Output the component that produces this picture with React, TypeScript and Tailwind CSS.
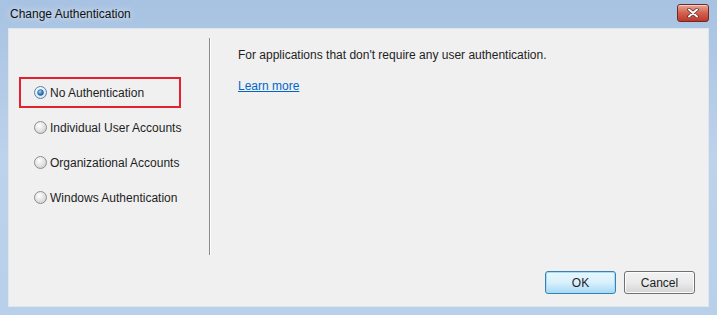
import React from "react";

const options = [
  "No Authentication",
  "Individual User Accounts",
  "Organizational Accounts",
  "Windows Authentication",
];

function Radio({ checked }: { checked: boolean }) {
  return (
    <svg width="13" height="13" viewBox="0 0 13 13" className="shrink-0">
      <defs>
        <radialGradient id={checked ? "rg-on" : "rg-off"} cx="40%" cy="35%" r="70%">
          <stop offset="0%" stopColor="#ffffff" />
          <stop offset="100%" stopColor={checked ? "#d6e4f2" : "#cfcfcf"} />
        </radialGradient>
        <radialGradient id="dot" cx="40%" cy="35%" r="70%">
          <stop offset="0%" stopColor="#a9d4f5" />
          <stop offset="60%" stopColor="#2f7fc4" />
          <stop offset="100%" stopColor="#1d4f8a" />
        </radialGradient>
      </defs>
      <circle cx="6.5" cy="6.5" r="6" fill={`url(#${checked ? "rg-on" : "rg-off"})`} stroke={checked ? "#5b7fa6" : "#8e8f8f"} strokeWidth="1" />
      {checked && <circle cx="6.5" cy="6.5" r="3" fill="url(#dot)" stroke="#2a5a8e" strokeWidth="0.5" />}
    </svg>
  );
}

export default function App() {
  return (
    <div
      className="w-[717px] h-[315px] flex flex-col bg-gradient-to-b from-[#a7c2e2] via-[#bdd2eb] to-[#b8d0ea] text-[12px] text-[#1e1e1e]"
      style={{ fontFamily: '"Liberation Sans", Arial, sans-serif' }}
    >
      {/* Title bar */}
      <div className="h-[28px] flex items-center justify-between pl-[10px] pr-[8px] shrink-0">
        <span className="text-[12px] text-[#111] [text-shadow:0_0_6px_rgba(255,255,255,0.9)]">
          Change Authentication
        </span>
        <div className="w-[32px] h-[18px] -mt-[3px] rounded-[3px] border border-[#6b2a24] bg-gradient-to-b from-[#e8a595] via-[#d3604e] to-[#c0352a] flex items-center justify-center shadow-[inset_0_1px_0_rgba(255,255,255,0.5)]">
          <svg width="12" height="10" viewBox="0 0 12 10">
            <path d="M2 1.5 L10 8.5 M10 1.5 L2 8.5" stroke="#5a2a25" strokeWidth="3.4" strokeLinecap="round" />
            <path d="M2 1.5 L10 8.5 M10 1.5 L2 8.5" stroke="#ffffff" strokeWidth="2" strokeLinecap="round" />
          </svg>
        </div>
      </div>

      {/* Client area */}
      <div className="mx-[8px] mb-[8px] flex-1 flex flex-col bg-[#f0f0f0] border border-[#dfe6ee]">
        <div className="flex mt-[9px] h-[217px]">
          {/* Left options */}
          <div className="w-[200px] pt-[37px] pl-[10px]">
            {options.map((o, i) =>
              i === 0 ? (
                <div key={o} className="h-[35px] flex items-center">
                  <div className="w-[162px] h-[31px] border-2 border-[#e2222e] flex items-center gap-[3px] pl-[13px]">
                    <Radio checked />
                    <span>{o}</span>
                  </div>
                </div>
              ) : (
                <div key={o} className="h-[35px] flex items-center gap-[3px] pl-[15px]">
                  <Radio checked={false} />
                  <span>{o}</span>
                </div>
              )
            )}
          </div>
          {/* Divider */}
          <div className="w-px bg-[#8a8a8a] border-r border-white box-content" />
          {/* Right description */}
          <div className="pl-[27px] pt-[9px] flex flex-col gap-[15px]">
            <p className="leading-[16px]">For applications that don&apos;t require any user authentication.</p>
            <a href="#" className="leading-[16px] text-[#0066cc] underline w-fit">
              Learn more
            </a>
          </div>
        </div>

        {/* Buttons */}
        <div className="mt-auto mb-[12px] flex justify-end gap-[8px] pr-[13px]">
          <button className="w-[71px] h-[23px] rounded-[3px] border border-[#3c7fb1] bg-gradient-to-b from-[#eaf6fd] via-[#d9f0fc] to-[#a7d9f5] shadow-[inset_0_0_0_1px_#9ee0f8] text-[12px]">
            OK
          </button>
          <button className="w-[71px] h-[23px] rounded-[3px] border border-[#707070] bg-gradient-to-b from-[#f2f2f2] via-[#ebebeb] to-[#d5d5d5] shadow-[inset_0_0_0_1px_#fcfcfc] text-[12px]">
            Cancel
          </button>
        </div>
      </div>
    </div>
  );
}
